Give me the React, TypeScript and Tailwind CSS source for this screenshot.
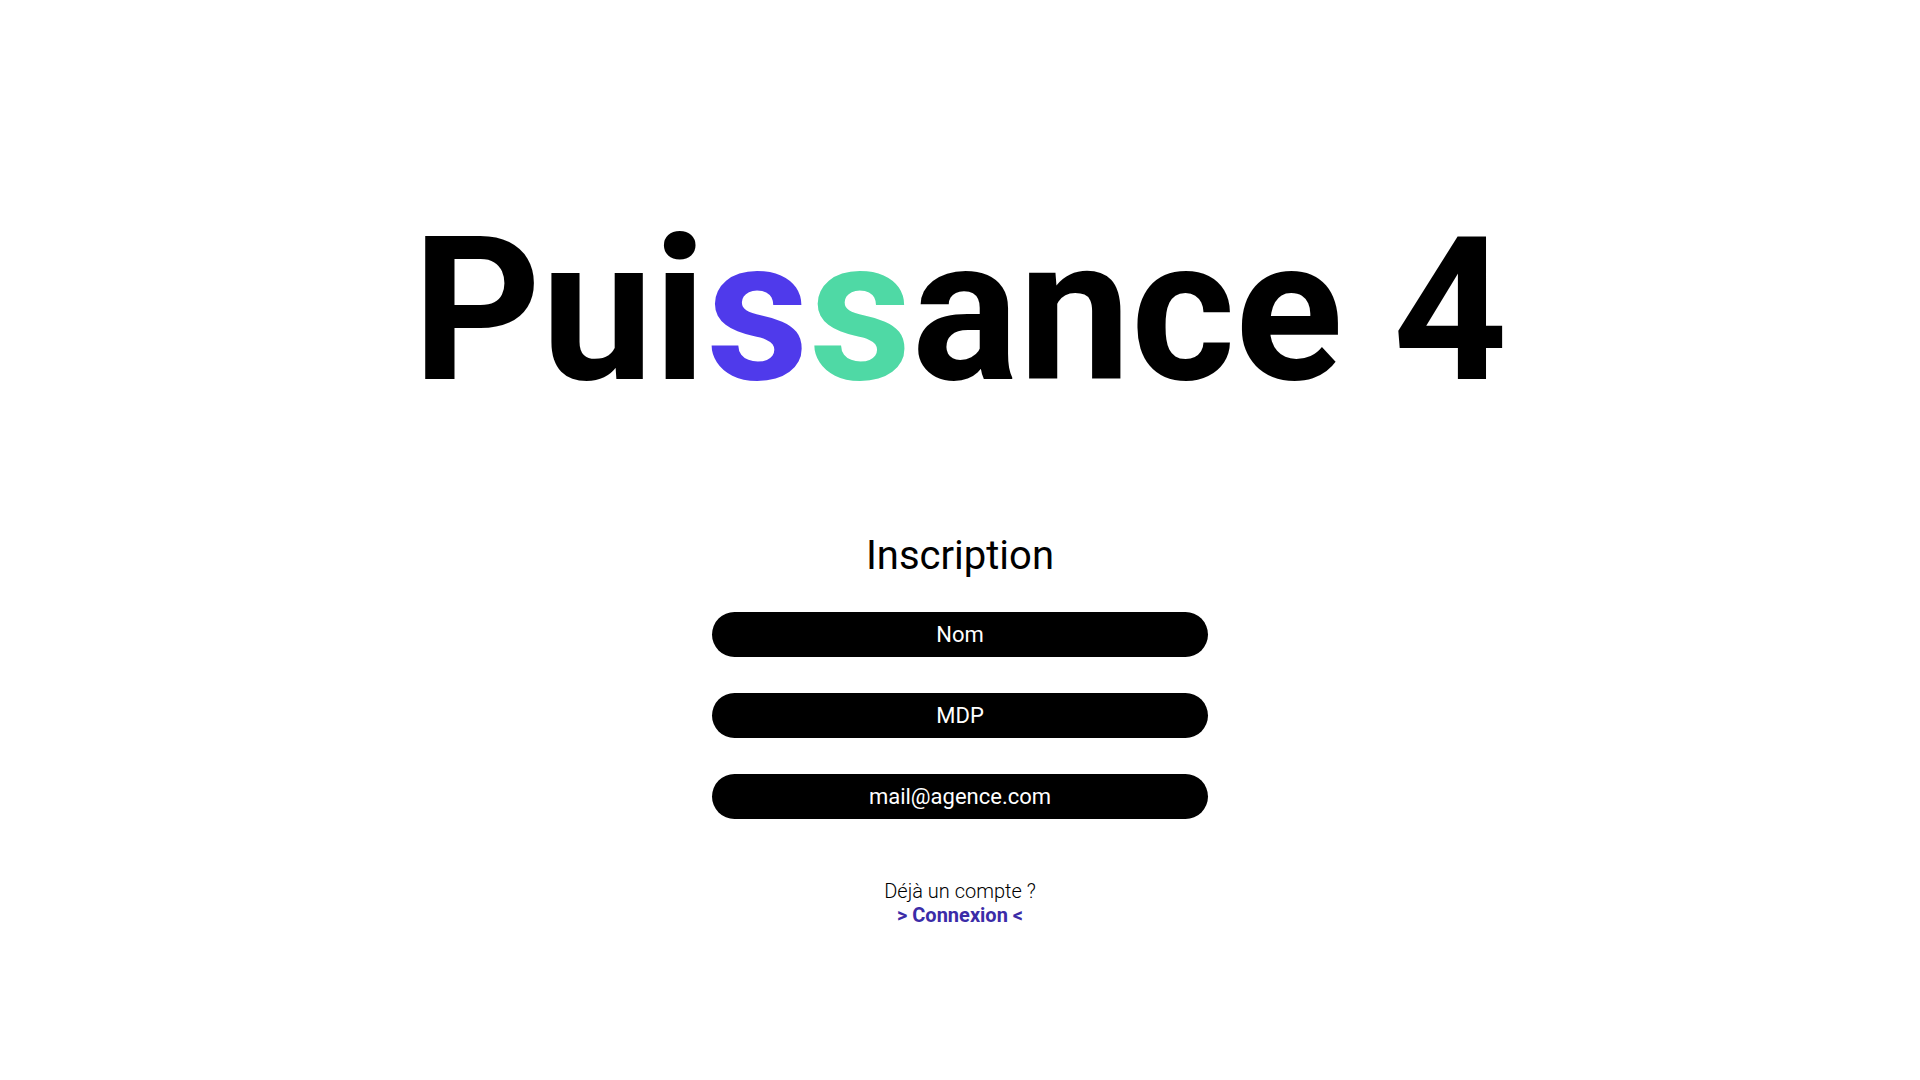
import { useState } from "react";

const Field = ({ placeholder, type = "text" }: { placeholder: string; type?: string }) => {
  const [value, setValue] = useState("");
  return (
    <input
      type={type}
      value={value}
      onChange={(e) => setValue(e.target.value)}
      placeholder={placeholder}
      className="w-[496px] h-[45px] rounded-full bg-black text-white text-center text-[22px] outline-none placeholder:text-white"
    />
  );
};

const App = () => {
  return (
    <div className="min-h-screen w-full bg-white flex flex-col items-center pt-[211px] font-['Roboto',sans-serif] text-black">
      <h1 className="text-[200px] leading-[200px] font-bold tracking-normal">
        Pui<span className="text-[#4f3aeb]">s</span>
        <span className="text-[#4fd9a5]">s</span>ance 4
      </h1>

      <h2 className="mt-[125px] text-[40px] leading-[40px] font-normal">Inscription</h2>

      <form className="mt-[36px] flex flex-col gap-[36px]" onSubmit={(e) => e.preventDefault()}>
        <Field placeholder="Nom" />
        <Field placeholder="MDP" type="password" />
        <Field placeholder="mail@agence.com" type="email" />
      </form>

      <div className="mt-[60px] flex flex-col items-center text-[20px] leading-[24px]">
        <p className="font-light">Déjà un compte ?</p>
        <a href="#" className="font-bold text-[#3b2ca8]">
          &gt; Connexion &lt;
        </a>
      </div>
    </div>
  );
};

export default App;
